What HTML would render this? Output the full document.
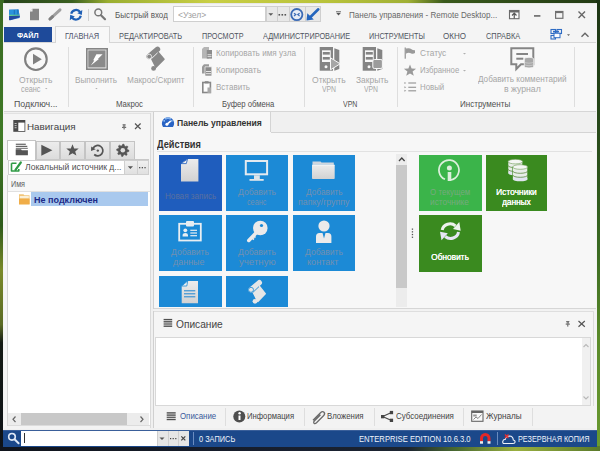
<!DOCTYPE html>
<html><head><meta charset="utf-8"><style>
html,body{margin:0;padding:0;width:600px;height:451px;overflow:hidden;}
body{position:relative;background:#1d2a12;font-family:"Liberation Sans",sans-serif;}
.t{position:absolute;white-space:nowrap;transform-origin:0 0;font-family:"Liberation Sans",sans-serif;}
.r{position:absolute;display:block;}
</style></head><body>
<div class="r" style="left:0;top:0;width:600px;height:451px;background:#2a4a1c"></div>
<div class="r" style="left:0;top:0;width:600px;height:4px;background:linear-gradient(90deg,#24401a 0%,#3a6020 12%,#9aae30 18%,#c9cf45 35%,#b8c23a 55%,#a0b035 68%,#3a5a1c 74%,#223a14 100%)"></div>
<div class="r" style="left:0;top:0;width:4px;height:451px;background:linear-gradient(180deg,#3a6a22 0%,#3f7a26 30%,#2e5a1a 50%,#7a8a2a 60%,#5a6a24 72%,#141a14 76%,#0e1218 100%)"></div>
<div class="r" style="left:596px;top:0;width:4px;height:451px;background:linear-gradient(180deg,#1c3414 0%,#284a1a 30%,#3a6a22 55%,#5a8a2a 75%,#6a9a30 100%)"></div>
<div class="r" style="left:0;top:446px;width:600px;height:5px;background:linear-gradient(90deg,#10141c 0%,#182030 50%,#1c2430 68%,#4a6a30 76%,#9ab040 86%,#5a7a2a 100%)"></div>
<div class="r" style="left:3px;top:3px;width:594px;height:444px;background:#f3f3f3;"></div>
<div class="r" style="left:3px;top:3px;width:594px;height:1px;background:#e8e8e8;"></div>
<div class="r" style="left:4px;top:4px;width:592px;height:22px;background:#f4f4f4;"></div>
<div class="r" style="left:4px;top:26px;width:592px;height:17px;background:#f4f4f4;"></div>
<div class="r" style="left:4px;top:27px;width:48px;height:15px;background:#1e4a9a;"></div>
<div class="r" style="left:55px;top:26px;width:55px;height:17px;background:#f8f8f8;border:1px solid #d6d6d6;border-bottom:none;box-sizing:border-box"></div>
<div class="r" style="left:4px;top:42px;width:592px;height:70px;background:#f8f8f8;border-top:1px solid #d6d6d6;border-bottom:1px solid #d6d6d6;box-sizing:border-box"></div>
<div class="r" style="left:56px;top:41px;width:53px;height:2px;background:#f8f8f8;"></div>
<div class="r" style="left:68px;top:47px;width:1px;height:60px;background:#dedede;"></div>
<div class="r" style="left:193px;top:47px;width:1px;height:60px;background:#dedede;"></div>
<div class="r" style="left:304px;top:47px;width:1px;height:60px;background:#dedede;"></div>
<div class="r" style="left:397px;top:47px;width:1px;height:60px;background:#dedede;"></div>
<div class="r" style="left:574px;top:47px;width:1px;height:60px;background:#dedede;"></div>
<div class="r" style="left:4px;top:112px;width:592px;height:318px;background:#f0f0f0;"></div>
<div class="r" style="left:4px;top:113px;width:147px;height:315px;background:#f5f5f5;"></div>
<div class="r" style="left:150px;top:113px;width:1px;height:315px;background:#dadada;"></div>
<div class="r" style="left:4px;top:113px;width:146px;height:1px;background:#e2e2e2;"></div>
<div class="r" style="left:7px;top:159px;width:142px;height:1px;background:#c8c8c8;"></div>
<div class="r" style="left:36px;top:141px;width:24px;height:18px;background:linear-gradient(#ececec,#dcdcdc);border:1px solid #c4c4c4;border-bottom:none;box-sizing:border-box"></div>
<div class="r" style="left:60px;top:141px;width:25px;height:18px;background:linear-gradient(#ececec,#dcdcdc);border:1px solid #c4c4c4;border-bottom:none;box-sizing:border-box"></div>
<div class="r" style="left:85px;top:141px;width:25px;height:18px;background:linear-gradient(#ececec,#dcdcdc);border:1px solid #c4c4c4;border-bottom:none;box-sizing:border-box"></div>
<div class="r" style="left:110px;top:141px;width:25px;height:18px;background:linear-gradient(#ececec,#dcdcdc);border:1px solid #c4c4c4;border-bottom:none;box-sizing:border-box"></div>
<div class="r" style="left:7px;top:140px;width:29px;height:20px;background:#ffffff;border:1px solid #c4c4c4;border-bottom:none;box-sizing:border-box"></div>
<div class="r" style="left:8px;top:160px;width:141px;height:15px;background:#ffffff;border:1px solid #cfcfcf;box-sizing:border-box"></div>
<div class="r" style="left:124px;top:161px;width:13px;height:13px;background:linear-gradient(#f0f0f0,#e0e0e0);border-left:1px solid #cfcfcf;box-sizing:border-box"></div>
<div class="r" style="left:137px;top:161px;width:11px;height:13px;background:linear-gradient(#f0f0f0,#e0e0e0);border-left:1px solid #cfcfcf;box-sizing:border-box"></div>
<div class="r" style="left:7px;top:175px;width:143px;height:252px;background:#ffffff;border:1px solid #d6d6d6;border-top:none;border-right:none;box-sizing:border-box"></div>
<div class="r" style="left:8px;top:175px;width:142px;height:16px;background:#f7f7f7;"></div>
<div class="r" style="left:8px;top:191px;width:142px;height:1px;background:#e0e0e0;"></div>
<div class="r" style="left:31px;top:192px;width:117px;height:14px;background:#a9c9ee;"></div>
<div class="r" style="left:8px;top:413px;width:141px;height:12px;background:#ececec;"></div>
<div class="r" style="left:21px;top:413px;width:106px;height:12px;background:#c8c8c8;"></div>
<div class="r" style="left:8px;top:425px;width:142px;height:1px;background:#dcdcdc;"></div>
<div class="r" style="left:5px;top:426px;width:145px;height:3px;background:#f3f3f3;"></div>
<div class="r" style="left:153px;top:112px;width:443px;height:197px;background:#f7f7f7;"></div>
<div class="r" style="left:153px;top:112px;width:1px;height:197px;background:#d0d0d0;"></div>
<div class="r" style="left:271px;top:112px;width:325px;height:20px;background:#f0f0f0;"></div>
<div class="r" style="left:270px;top:112px;width:1px;height:20px;background:#d4d4d4;"></div>
<div class="r" style="left:271px;top:132px;width:325px;height:1px;background:#d4d4d4;"></div>
<div class="r" style="left:157px;top:151px;width:435px;height:1px;background:#e2e2e2;"></div>
<div class="r" style="left:154px;top:308px;width:442px;height:1px;background:#d6d6d6;"></div>
<div class="r" style="left:154px;top:309px;width:442px;height:2px;background:#f2f2f2;"></div>
<div class="r" style="left:396px;top:154px;width:11px;height:153px;background:#ececec;"></div>
<div class="r" style="left:396px;top:165px;width:11px;height:123px;background:#c9c9c9;"></div>
<div class="r" style="left:153px;top:311px;width:443px;height:117px;background:#f5f5f5;"></div>
<div class="r" style="left:153px;top:311px;width:1px;height:117px;background:#d0d0d0;"></div>
<div class="r" style="left:154px;top:311px;width:442px;height:1px;background:#dedede;"></div>
<div class="r" style="left:593px;top:312px;width:1px;height:116px;background:#dcdcdc;"></div>
<div class="r" style="left:594px;top:311px;width:2px;height:117px;background:#f3f3f3;"></div>
<div class="r" style="left:155px;top:337px;width:436px;height:69px;background:#ffffff;border:1px solid #d8d8d8;box-sizing:border-box"></div>
<div class="r" style="left:582px;top:338px;width:8px;height:67px;background:#f0f0f0;"></div>
<div class="r" style="left:154px;top:406px;width:442px;height:22px;background:#f3f3f3;"></div>
<div class="r" style="left:225px;top:408px;width:1px;height:18px;background:#dedede;"></div>
<div class="r" style="left:304px;top:408px;width:1px;height:18px;background:#dedede;"></div>
<div class="r" style="left:374px;top:408px;width:1px;height:18px;background:#dedede;"></div>
<div class="r" style="left:463px;top:408px;width:1px;height:18px;background:#dedede;"></div>
<div class="r" style="left:532px;top:408px;width:1px;height:18px;background:#dedede;"></div>
<div class="r" style="left:3px;top:430px;width:594px;height:17px;background:#1b488a;"></div>
<div class="r" style="left:3px;top:430px;width:594px;height:1px;background:#3a5f9a;"></div>
<div class="r" style="left:21px;top:431px;width:136px;height:15px;background:#ffffff;"></div>
<div class="r" style="left:157px;top:431px;width:11px;height:15px;background:#e6e6e6;border-left:1px solid #cfcfcf;box-sizing:border-box"></div>
<div class="r" style="left:168px;top:431px;width:10px;height:15px;background:#e6e6e6;border-left:1px solid #cfcfcf;box-sizing:border-box"></div>
<div class="r" style="left:178px;top:431px;width:11px;height:15px;background:#e6e6e6;border-left:1px solid #cfcfcf;box-sizing:border-box"></div>
<div class="r" style="left:193px;top:432px;width:1px;height:13px;background:#6a8cc0;"></div>
<div class="r" style="left:497px;top:432px;width:1px;height:13px;background:#6a8cc0;"></div>
<div class="r" style="left:24px;top:433px;width:1px;height:10px;background:#303030;"></div>
<div class="t" style="left:17.00px;top:31.77px;font-size:7.8px;line-height:7.8px;color:#ffffff;font-weight:bold;transform:scaleX(0.9281);">ФАЙЛ</div>
<div class="t" style="left:65.00px;top:31.57px;font-size:8.5px;line-height:8.5px;color:#4a5068;font-weight:normal;transform:scaleX(0.8724);">ГЛАВНАЯ</div>
<div class="t" style="left:118.75px;top:31.67px;font-size:8.5px;line-height:8.5px;color:#50555f;font-weight:normal;transform:scaleX(0.8749);">РЕДАКТИРОВАТЬ</div>
<div class="t" style="left:202.00px;top:31.67px;font-size:8.5px;line-height:8.5px;color:#50555f;font-weight:normal;transform:scaleX(0.8506);">ПРОСМОТР</div>
<div class="t" style="left:262.50px;top:31.67px;font-size:8.5px;line-height:8.5px;color:#50555f;font-weight:normal;transform:scaleX(0.8618);">АДМИНИСТРИРОВАНИЕ</div>
<div class="t" style="left:368.75px;top:31.67px;font-size:8.5px;line-height:8.5px;color:#50555f;font-weight:normal;transform:scaleX(0.8489);">ИНСТРУМЕНТЫ</div>
<div class="t" style="left:443.00px;top:31.67px;font-size:8.5px;line-height:8.5px;color:#50555f;font-weight:normal;transform:scaleX(0.9461);">ОКНО</div>
<div class="t" style="left:485.75px;top:31.67px;font-size:8.5px;line-height:8.5px;color:#50555f;font-weight:normal;transform:scaleX(0.8703);">СПРАВКА</div>
<div class="t" style="left:115.00px;top:11.08px;font-size:8.5px;line-height:8.5px;color:#585858;font-weight:normal;transform:scaleX(0.9440);">Быстрый вход</div>
<div class="r" style="left:173px;top:6px;width:93px;height:16px;background:#ffffff;border:1px solid #cfcfcf;box-sizing:border-box"></div>
<div class="r" style="left:266px;top:6px;width:55px;height:16px;background:#e8e8e8;border:1px solid #cfcfcf;box-sizing:border-box"></div>
<div class="r" style="left:277px;top:7px;width:1px;height:14px;background:#cfcfcf;"></div>
<div class="r" style="left:289px;top:7px;width:1px;height:14px;background:#cfcfcf;"></div>
<div class="r" style="left:305px;top:7px;width:1px;height:14px;background:#cfcfcf;"></div>
<div class="t" style="left:177.50px;top:11.47px;font-size:8.5px;line-height:8.5px;color:#a0a0a0;font-weight:normal;transform:scaleX(1.0089);">&lt;Узел&gt;</div>
<div class="t" style="left:349.20px;top:10.97px;font-size:8.5px;line-height:8.5px;color:#686868;font-weight:normal;transform:scaleX(0.9505);">Панель управления - Remote Desktop...</div>
<div class="r" style="left:88px;top:9px;width:1px;height:12px;background:#d0d0d0;"></div>
<div class="t" style="left:18.60px;top:75.78px;font-size:8.5px;line-height:8.5px;color:#a6a6a6;font-weight:normal;transform:scaleX(1.0011);">Открыть</div>
<div class="t" style="left:21.30px;top:84.98px;font-size:8.5px;line-height:8.5px;color:#a6a6a6;font-weight:normal;transform:scaleX(0.8608);">сеанс</div>
<div class="t" style="left:14.00px;top:100.48px;font-size:8.5px;line-height:8.5px;color:#505050;font-weight:normal;transform:scaleX(1.0339);">Подключ...</div>
<div class="t" style="left:75.40px;top:75.98px;font-size:8.5px;line-height:8.5px;color:#a6a6a6;font-weight:normal;transform:scaleX(0.9623);">Выполнить</div>
<div class="t" style="left:126.80px;top:75.98px;font-size:8.5px;line-height:8.5px;color:#a6a6a6;font-weight:normal;transform:scaleX(0.9647);">Макрос/Скрипт</div>
<div class="t" style="left:116.40px;top:100.48px;font-size:8.5px;line-height:8.5px;color:#505050;font-weight:normal;transform:scaleX(0.9207);">Макрос</div>
<div class="t" style="left:216.00px;top:48.77px;font-size:8.5px;line-height:8.5px;color:#a6a6a6;font-weight:normal;transform:scaleX(0.9584);">Копировать имя узла</div>
<div class="t" style="left:216.00px;top:66.18px;font-size:8.5px;line-height:8.5px;color:#a6a6a6;font-weight:normal;transform:scaleX(0.9831);">Копировать</div>
<div class="t" style="left:216.00px;top:83.48px;font-size:8.5px;line-height:8.5px;color:#a6a6a6;font-weight:normal;transform:scaleX(0.9434);">Вставить</div>
<div class="t" style="left:221.60px;top:100.48px;font-size:8.5px;line-height:8.5px;color:#505050;font-weight:normal;transform:scaleX(0.9066);">Буфер обмена</div>
<div class="t" style="left:312.00px;top:75.88px;font-size:8.5px;line-height:8.5px;color:#a6a6a6;font-weight:normal;transform:scaleX(1.0071);">Открыть</div>
<div class="t" style="left:321.60px;top:84.88px;font-size:8.5px;line-height:8.5px;color:#a6a6a6;font-weight:normal;transform:scaleX(0.8015);">VPN</div>
<div class="t" style="left:355.60px;top:75.88px;font-size:8.5px;line-height:8.5px;color:#a6a6a6;font-weight:normal;transform:scaleX(0.9901);">Закрыть</div>
<div class="t" style="left:364.40px;top:84.88px;font-size:8.5px;line-height:8.5px;color:#a6a6a6;font-weight:normal;transform:scaleX(0.8015);">VPN</div>
<div class="t" style="left:343.00px;top:100.48px;font-size:8.5px;line-height:8.5px;color:#505050;font-weight:normal;transform:scaleX(0.8244);">VPN</div>
<div class="t" style="left:419.75px;top:49.27px;font-size:8.5px;line-height:8.5px;color:#a6a6a6;font-weight:normal;transform:scaleX(0.9773);">Статус</div>
<div class="t" style="left:419.75px;top:66.38px;font-size:8.5px;line-height:8.5px;color:#a6a6a6;font-weight:normal;transform:scaleX(0.9108);">Избранное</div>
<div class="t" style="left:419.75px;top:83.28px;font-size:8.5px;line-height:8.5px;color:#a6a6a6;font-weight:normal;transform:scaleX(0.9248);">Новый</div>
<div class="t" style="left:478.20px;top:75.28px;font-size:8.5px;line-height:8.5px;color:#a6a6a6;font-weight:normal;transform:scaleX(0.9593);">Добавить комментарий</div>
<div class="t" style="left:503.75px;top:84.58px;font-size:8.5px;line-height:8.5px;color:#a6a6a6;font-weight:normal;transform:scaleX(1.0233);">в журнал</div>
<div class="t" style="left:459.50px;top:100.48px;font-size:8.5px;line-height:8.5px;color:#505050;font-weight:normal;transform:scaleX(0.9472);">Инструменты</div>
<div class="t" style="left:27.30px;top:122.42px;font-size:9.5px;line-height:9.5px;color:#444444;font-weight:normal;transform:scaleX(1.0377);">Навигация</div>
<div class="t" style="left:24.80px;top:163.28px;font-size:8.5px;line-height:8.5px;color:#505050;font-weight:normal;transform:scaleX(1.0096);">Локальный источник д...</div>
<div class="t" style="left:11.00px;top:179.78px;font-size:8.5px;line-height:8.5px;color:#606060;font-weight:normal;transform:scaleX(0.8446);">Имя</div>
<div class="t" style="left:34.30px;top:195.78px;font-size:8.5px;line-height:8.5px;color:#1c2a88;font-weight:bold;transform:scaleX(1.0612);">Не подключен</div>
<div class="t" style="left:176.50px;top:119.28px;font-size:8.5px;line-height:8.5px;color:#333333;font-weight:bold;transform:scaleX(1.0096);">Панель управления</div>
<div class="t" style="left:157.30px;top:140.10px;font-size:10px;line-height:10px;color:#333333;font-weight:bold;transform:scaleX(0.9232);">Действия</div>
<div class="r" style="left:159px;top:155px;width:63px;height:56px;background:#1f5dbd;"></div>
<div class="r" style="left:226px;top:155px;width:62px;height:56px;background:#1c8ad6;"></div>
<div class="r" style="left:293px;top:155px;width:62px;height:56px;background:#1c8ad6;"></div>
<div class="r" style="left:159px;top:215px;width:63px;height:56px;background:#1c8ad6;"></div>
<div class="r" style="left:226px;top:215px;width:62px;height:56px;background:#1c8ad6;"></div>
<div class="r" style="left:293px;top:215px;width:62px;height:56px;background:#1c8ad6;"></div>
<div class="r" style="left:159px;top:276px;width:63px;height:31px;background:#1c8ad6;"></div>
<div class="r" style="left:226px;top:276px;width:62px;height:31px;background:#1c8ad6;"></div>
<div class="r" style="left:419px;top:155px;width:63px;height:56px;background:#3bb44a;"></div>
<div class="r" style="left:486px;top:155px;width:61px;height:56px;background:#3a8a1f;"></div>
<div class="r" style="left:419px;top:215px;width:63px;height:57px;background:#3a8a1f;"></div>
<div class="t" style="left:164.80px;top:192.28px;font-size:8.5px;line-height:8.5px;color:#5a70a0;font-weight:normal;transform:scaleX(0.9565);">Новая запись</div>
<div class="t" style="left:237.80px;top:188.08px;font-size:8.5px;line-height:8.5px;color:#7290b0;font-weight:normal;transform:scaleX(1.0141);">Добавить</div>
<div class="t" style="left:247.20px;top:197.58px;font-size:8.5px;line-height:8.5px;color:#7290b0;font-weight:normal;transform:scaleX(0.8520);">сеанс</div>
<div class="t" style="left:305.50px;top:188.08px;font-size:8.5px;line-height:8.5px;color:#7290b0;font-weight:normal;transform:scaleX(0.9768);">Добавить</div>
<div class="t" style="left:297.80px;top:197.58px;font-size:8.5px;line-height:8.5px;color:#7290b0;font-weight:normal;transform:scaleX(1.0319);">папку/группу</div>
<div class="t" style="left:171.00px;top:248.08px;font-size:8.5px;line-height:8.5px;color:#7290b0;font-weight:normal;transform:scaleX(1.0114);">Добавить</div>
<div class="t" style="left:173.20px;top:257.52px;font-size:8.5px;line-height:8.5px;color:#7290b0;font-weight:normal;transform:scaleX(1.0528);">данные</div>
<div class="t" style="left:238.00px;top:248.08px;font-size:8.5px;line-height:8.5px;color:#7290b0;font-weight:normal;transform:scaleX(1.0114);">Добавить</div>
<div class="t" style="left:239.00px;top:257.52px;font-size:8.5px;line-height:8.5px;color:#7290b0;font-weight:normal;transform:scaleX(1.1363);">учетную</div>
<div class="t" style="left:305.00px;top:248.08px;font-size:8.5px;line-height:8.5px;color:#7290b0;font-weight:normal;transform:scaleX(1.0114);">Добавить</div>
<div class="t" style="left:307.25px;top:257.52px;font-size:8.5px;line-height:8.5px;color:#7290b0;font-weight:normal;transform:scaleX(1.0695);">контакт</div>
<div class="t" style="left:429.50px;top:188.08px;font-size:8.5px;line-height:8.5px;color:#76aa7e;font-weight:normal;transform:scaleX(0.9361);">О текущем</div>
<div class="t" style="left:430.20px;top:197.58px;font-size:8.5px;line-height:8.5px;color:#76aa7e;font-weight:normal;transform:scaleX(0.9789);">источнике</div>
<div class="t" style="left:496.20px;top:188.08px;font-size:8.5px;line-height:8.5px;color:#ffffff;font-weight:normal;transform:scaleX(0.9889);text-shadow:0.2px 0 0 #ffffff">Источники</div>
<div class="t" style="left:501.80px;top:197.58px;font-size:8.5px;line-height:8.5px;color:#ffffff;font-weight:normal;transform:scaleX(0.9745);text-shadow:0.2px 0 0 #ffffff">данных</div>
<div class="t" style="left:430.90px;top:253.47px;font-size:8.5px;line-height:8.5px;color:#ffffff;font-weight:normal;transform:scaleX(0.9817);text-shadow:0.2px 0 0 #ffffff">Обновить</div>
<div class="t" style="left:175.50px;top:319.50px;font-size:10px;line-height:10px;color:#444444;font-weight:normal;transform:scaleX(1.0152);">Описание</div>
<div class="t" style="left:179.70px;top:412.38px;font-size:8.5px;line-height:8.5px;color:#3a5a9a;font-weight:normal;transform:scaleX(0.9258);">Описание</div>
<div class="t" style="left:247.30px;top:412.38px;font-size:8.5px;line-height:8.5px;color:#444444;font-weight:normal;transform:scaleX(0.9047);">Информация</div>
<div class="t" style="left:326.80px;top:412.38px;font-size:8.5px;line-height:8.5px;color:#444444;font-weight:normal;transform:scaleX(0.9166);">Вложения</div>
<div class="t" style="left:396.10px;top:412.38px;font-size:8.5px;line-height:8.5px;color:#444444;font-weight:normal;transform:scaleX(0.9331);">Субсоединения</div>
<div class="t" style="left:486.00px;top:412.38px;font-size:8.5px;line-height:8.5px;color:#444444;font-weight:normal;transform:scaleX(0.9611);">Журналы</div>
<div class="t" style="left:198.75px;top:434.77px;font-size:8.5px;line-height:8.5px;color:#f0f4fa;font-weight:normal;transform:scaleX(0.8686);">0 ЗАПИСЬ</div>
<div class="t" style="left:358.70px;top:435.17px;font-size:8.5px;line-height:8.5px;color:#f0f4fa;font-weight:normal;transform:scaleX(0.8984);">ENTERPRISE EDITION 10.6.3.0</div>
<div class="t" style="left:518.10px;top:435.17px;font-size:8.5px;line-height:8.5px;color:#f0f4fa;font-weight:normal;transform:scaleX(0.8570);">РЕЗЕРВНАЯ КОПИЯ</div>
<svg class="r" style="left:0;top:0;" width="600" height="451" viewBox="0 0 600 451">
    <path d="M9.1 9.8 L18.5 9.5 L19.8 16.8 L19.5 18 L10 20.3 L9.1 20 Z" fill="#2a6cc0"/>
    <path d="M9.1 9.8 L18.5 9.5 L19.3 14.7 L9.1 14.9 Z" fill="#2a92dc"/>
    <path d="M14.3 10 L14.3 14.7 M17.7 9.7 L17.9 14.6" stroke="#1a64b0" stroke-width="0.8"/>
    <path d="M9.1 15.4 L19.4 15.2" stroke="#6ad890" stroke-width="1.1"/>
    <path d="M9.1 16 L19.5 15.8 L19.8 17 L10 20.3 L9.1 20 Z" fill="#2448a0"/>
    <path d="M30 11.5 L32.5 8.8 L39 8.8 L39 20.3 L30 20.3 Z" fill="#858585"/>
    <path d="M30 11.5 L32.5 8.8 L32.5 11.5 Z" fill="#f4f4f4"/>
    <path d="M50 19 L60 9.8" stroke="#a0a0a0" stroke-width="3" stroke-linecap="round"/>
    <path d="M50 19 L52.5 16.7" stroke="#808080" stroke-width="3" stroke-linecap="round"/>
    <path d="M71.2 13.8 A5 5 0 0 1 80.2 12.2" stroke="#1f5fb5" stroke-width="2.2" fill="none"/>
    <path d="M82.3 10 L81.8 15 L77.3 13.3 Z" fill="#1f5fb5"/>
    <path d="M80.8 15.8 A5 5 0 0 1 71.8 17.3" stroke="#1f5fb5" stroke-width="2.2" fill="none"/>
    <path d="M69.8 20.2 L70.2 14.8 L74.8 16.4 Z" fill="#1f5fb5"/>
    <circle cx="98.3" cy="12.4" r="3.4" stroke="#767676" stroke-width="1.5" fill="none"/>
    <path d="M101 15.2 L105 19.2" stroke="#767676" stroke-width="2.2" stroke-linecap="round"/>
    <path d="M268.4 13.3 L273.2 13.3 L270.8 15.8 Z" fill="#5a5a5a"/>
    <rect x="278.5" y="14" width="1.6" height="1.6" fill="#555"/><rect x="281.5" y="14" width="1.6" height="1.6" fill="#555"/><rect x="284.5" y="14" width="1.6" height="1.6" fill="#555"/>
    <circle cx="296.8" cy="14.6" r="5.6" stroke="#3a6ab5" stroke-width="1.8" fill="#e6ecf6"/>
    <path d="M294 13.2 L295.8 14.6 L294 16" stroke="#3a6ab5" stroke-width="1.2" fill="none"/>
    <path d="M299.6 13.2 L297.8 14.6 L299.6 16" stroke="#3a6ab5" stroke-width="1.2" fill="none"/>
    <path d="M318.3 9.3 L310.5 17" stroke="#2465bd" stroke-width="2.6" stroke-linecap="round"/><path d="M306.5 20.5 L307.3 13.3 L313.8 19.6 Z" fill="#2465bd"/>
    <path d="M336 11.8 L341 11.8" stroke="#555" stroke-width="0.9"/>
    <path d="M336.3 13 L340.8 13 L338.5 15.6 Z" fill="#555"/>
    <rect x="509.5" y="10.5" width="9.5" height="8.2" stroke="#6a6a6a" stroke-width="1.1" fill="#fafafa"/>
    <rect x="509.5" y="10.5" width="9.5" height="2" fill="#6a6a6a"/>
    <path d="M514.25 18.5 L514.25 13.3 M512 15.5 L514.25 13.2 L516.5 15.5" stroke="#555" stroke-width="1.2" fill="none"/>
    <rect x="534" y="15" width="6.4" height="1.8" fill="#777"/>
    <rect x="555.6" y="11.5" width="7.3" height="6.8" stroke="#707070" stroke-width="1.2" fill="none"/>
    <rect x="555.6" y="11.3" width="7.3" height="1.8" fill="#707070"/>
    <path d="M578.5 11.5 L585 18 M585 11.5 L578.5 18" stroke="#666" stroke-width="1.4"/>
    </svg>
<svg class="r" style="left:0;top:0;" width="600" height="451" viewBox="0 0 600 451">
    <rect x="551" y="29.5" width="4.5" height="4" stroke="#2e6cc4" stroke-width="1.1" fill="none"/>
    <rect x="557" y="29.5" width="4.5" height="4" stroke="#2e6cc4" stroke-width="1.1" fill="none"/>
    <rect x="553" y="30.8" width="6" height="1.6" fill="#2e6cc4"/>
    <rect x="551" y="35.5" width="4.5" height="3.5" stroke="#2e6cc4" stroke-width="1.1" fill="none"/>
    <rect x="554" y="33.2" width="6" height="4.5" stroke="#2e6cc4" stroke-width="1" fill="#fafcff"/>
    <path d="M567 34.3 L570 34.3 L568.5 36 Z" fill="#666"/>
    <path d="M581.5 36.8 L585 33.3 L588.5 36.8" stroke="#666" stroke-width="1.4" fill="none"/>
    </svg>
<svg class="r" style="left:0;top:0;" width="600" height="451" viewBox="0 0 600 451">
    <circle cx="35.9" cy="59.2" r="10.8" stroke="#808080" stroke-width="2.1" fill="none"/>
    <path d="M33 53.8 L41.8 59.2 L33 64.6 Z" fill="#808080"/>
    <rect x="86.8" y="48.8" width="20.4" height="20.4" stroke="#858585" stroke-width="1.6" fill="#e8e8e8"/>
    <rect x="88.3" y="50.4" width="17.2" height="17" fill="#8a8a8a"/>
    <path d="M96.4 54.2 L102.6 54.2 L97.9 58.9 L98.9 59.1 L90.8 65.6 L94.3 60.4 L93.2 60.2 Z" fill="#ffffff"/>
    <path d="M149 56.5 L157.5 49.3" stroke="#888" stroke-width="5.4" stroke-linecap="round"/>
    <path d="M151.5 58.5 L158.3 52.5 L164 59.3 L156 67.3 Z" fill="#888" stroke="#888" stroke-width="1.5" stroke-linejoin="round"/>
    <circle cx="149.2" cy="56.6" r="2.4" fill="#888" stroke="#f8f8f8" stroke-width="0.8"/>
    <circle cx="153.6" cy="68.4" r="2.4" fill="#888"/>
    <path d="M151.3 58.8 L157.6 52.8" stroke="#f8f8f8" stroke-width="0.9"/>
    </svg>
<svg class="r" style="left:0;top:0;" width="600" height="451" viewBox="0 0 600 451">
    <path d="M202 49 L204 47 L209 47 L209 58.6 L202 58.6 Z" fill="#b5b5b5"/>
    <rect x="206.8" y="50" width="5.2" height="8.6" fill="#8c8c8c"/>
    <rect x="207.5" y="54.3" width="4" height="0.9" fill="#e8e8e8"/><rect x="207.5" y="56.2" width="4" height="0.9" fill="#e8e8e8"/>
    <path d="M202 66.5 L204 64.3 L209 64.3 L209 73.5 L202 73.5 Z" fill="#9a9a9a"/>
    <path d="M205 66.8 L211.8 66.8 L211.8 76 L205 76 Z" fill="#8a8a8a" stroke="#f8f8f8" stroke-width="0.7"/>
    <rect x="206" y="71" width="5" height="1" fill="#e6e6e6"/><rect x="206" y="73.2" width="5" height="1" fill="#e6e6e6"/>
    <rect x="202.8" y="82.5" width="7.6" height="10" stroke="#888" stroke-width="1.6" fill="#fdfdfd"/>
    <rect x="204.8" y="81.2" width="3.8" height="2.2" fill="#888"/>
    <rect x="207.5" y="87.5" width="3.5" height="5.5" fill="#a8a8a8"/>
    </svg>
<svg class="r" style="left:0;top:0;" width="600" height="451" viewBox="0 0 600 451"><g transform="translate(0,0)">
        <path d="M334.3 48.2 L339.3 50 L339.3 69 L334.3 70.7 Z" fill="#848484"/>
        <rect x="319.7" y="47" width="13.3" height="23.7" fill="#848484"/>
        <rect x="322" y="50.3" width="8.7" height="11.7" fill="#f8f8f8"/>
        <rect x="322.8" y="52" width="7" height="2.6" fill="#848484"/>
        <rect x="322.8" y="57" width="7" height="2.6" fill="#848484"/>
        <circle cx="326" cy="66.7" r="1.5" fill="#f8f8f8"/>
        </g></svg>
<svg class="r" style="left:0;top:0;" width="600" height="451" viewBox="0 0 600 451"><g transform="translate(43,0)">
        <path d="M334.3 48.2 L339.3 50 L339.3 69 L334.3 70.7 Z" fill="#848484"/>
        <rect x="319.7" y="47" width="13.3" height="23.7" fill="#848484"/>
        <rect x="322" y="50.3" width="8.7" height="11.7" fill="#f8f8f8"/>
        <rect x="322.8" y="52" width="7" height="2.6" fill="#848484"/>
        <rect x="322.8" y="57" width="7" height="2.6" fill="#848484"/>
        <circle cx="326" cy="66.7" r="1.5" fill="#f8f8f8"/>
        </g></svg>
<svg class="r" style="left:0;top:0;" width="600" height="451" viewBox="0 0 600 451">
    <path d="M330.5 57.8 L340.2 63.8 L330.5 69.8 Z" fill="#a6a6a6" stroke="#f8f8f8" stroke-width="1"/>
    <rect x="372.8" y="59.5" width="9.6" height="9" rx="1.5" fill="#9c9c9c" stroke="#f8f8f8" stroke-width="1"/>
    </svg>
<svg class="r" style="left:0;top:0;" width="600" height="451" viewBox="0 0 600 451">
    <rect x="404.6" y="47.5" width="1.3" height="11.2" fill="#9a9a9a"/>
    <path d="M405.8 48.6 Q409.5 47.6 411.5 49.2 Q413 50.4 415 50.2 L415 53 Q413 54.4 410.8 53.2 Q408.5 52 405.8 53.8 Z" fill="#9a9a9a"/>
    <path d="M410 64.4 L411.6 68.6 L416.1 68.8 L412.6 71.6 L413.8 75.8 L410 73.4 L406.2 75.8 L407.4 71.6 L403.9 68.8 L408.4 68.6 Z" fill="#9a9a9a"/>
    <path d="M404.4 82 L406.3 83 L404.4 84 Z M404.4 86.3 L406.3 87.3 L404.4 88.3 Z M404.4 89.8 L406.3 90.8 L404.4 91.8 Z" fill="#9a9a9a"/>
    <rect x="408.3" y="82.4" width="7.8" height="1.2" fill="#9a9a9a"/>
    <rect x="408.3" y="86.7" width="7.8" height="1.2" fill="#9a9a9a"/>
    <rect x="408.3" y="90.2" width="7.8" height="1.2" fill="#9a9a9a"/>
    <path d="M463 53 L466 53 L464.5 54.6 Z" fill="#b0b0b0"/>
    <path d="M463 70 L466 70 L464.5 71.6 Z" fill="#b0b0b0"/>
    <path d="M45 88 L47.5 88 L46.25 89.3 Z" fill="#b0b0b0"/>
    <path d="M95.2 88 L97.7 88 L96.45 89.3 Z" fill="#b0b0b0"/>
    </svg>
<svg class="r" style="left:0;top:0;" width="600" height="451" viewBox="0 0 600 451">
    <path d="M511.3 48.3 L533.3 48.3 L533.3 64.3 L521 64.3 L516.3 69 L516.3 64.3 L511.3 64.3 Z" stroke="#858585" stroke-width="2" fill="#f8f8f8" stroke-linejoin="miter"/>
    <rect x="516.3" y="53" width="11.7" height="2" fill="#858585"/>
    <rect x="516.3" y="57.7" width="7" height="2" fill="#858585"/>
    <path d="M524.3 59 A4.7 1.7 0 0 1 533.7 59 L533.7 66.3 A4.7 1.7 0 0 1 524.3 66.3 Z" fill="#a8a8a8" stroke="#f8f8f8" stroke-width="0.8"/>
    <path d="M524.3 61.5 A4.7 1.7 0 0 0 533.7 61.5 M524.3 64 A4.7 1.7 0 0 0 533.7 64" stroke="#d8d8d8" stroke-width="0.6" fill="none"/>
    </svg>
<svg class="r" style="left:0;top:0;" width="600" height="451" viewBox="0 0 600 451">
    <rect x="13.3" y="120" width="12" height="11.8" fill="#4a4a4a"/>
    <rect x="18.3" y="122.6" width="6.2" height="8.4" fill="#ffffff"/>
    <rect x="14.6" y="123" width="2" height="0.9" fill="#cfcfcf"/>
    <rect x="14.6" y="125.2" width="2" height="0.9" fill="#cfcfcf"/>
    <rect x="14.6" y="127.3" width="2" height="0.9" fill="#cfcfcf"/>
    <path d="M122.6 124.8 L125.6 124.8 M124.1 127.6 L124.1 129.5 M122 127.4 L126.2 127.4" stroke="#5a5a5a" stroke-width="1"/>
    <rect x="122.9" y="124.8" width="2.4" height="2.6" fill="#8a8a8a"/>
    <path d="M135 123.5 L140.6 129 M140.6 123.5 L135 129" stroke="#555" stroke-width="1.2"/>
    </svg>
<svg class="r" style="left:0;top:0;" width="600" height="451" viewBox="0 0 600 451">
    <rect x="15.8" y="143.7" width="10" height="1.1" fill="#555"/>
    <rect x="15.8" y="145.8" width="11.5" height="1.1" fill="#555"/>
    <rect x="15.8" y="147.8" width="12" height="1.1" fill="#777"/>
    <path d="M15.7 149.3 L21 149.3 L21.8 150.3 L27.9 150.3 L27.9 155.3 L15.7 155.3 Z" fill="#555"/>
    <path d="M41.3 144.8 L52.4 150.3 L41.3 155.8 Z" fill="#555"/>
    <path d="M72.5 144.2 L74.2 148.4 L78.7 148.6 L75.2 151.4 L76.4 155.6 L72.5 153.2 L68.6 155.6 L69.8 151.4 L66.3 148.6 L70.8 148.4 Z" fill="#555"/>
    <path d="M93.2 148 A5.2 5.2 0 1 1 94.2 154.5" stroke="#555" stroke-width="1.7" fill="none"/>
    <path d="M91.2 146.5 L95.7 149.3 L91 151 Z" fill="#555"/>
    <circle cx="97.8" cy="150.6" r="1.2" fill="#555"/>
    </svg>
<svg class="r" style="left:0;top:0;" width="600" height="451" viewBox="0 0 600 451"><polygon points="122.80,144.10 124.01,144.22 124.56,146.05 125.36,146.48 127.18,145.92 127.96,146.86 127.05,148.54 127.31,149.40 129.00,150.30 128.88,151.51 127.05,152.06 126.62,152.86 127.18,154.68 126.24,155.46 124.56,154.55 123.70,154.81 122.80,156.50 121.59,156.38 121.04,154.55 120.24,154.12 118.42,154.68 117.64,153.74 118.55,152.06 118.29,151.20 116.60,150.30 116.72,149.09 118.55,148.54 118.98,147.74 118.42,145.92 119.36,145.14 121.04,146.05 121.90,145.79" fill="#555" stroke="#555" stroke-width="0.5" stroke-linejoin="round"/><circle cx="122.8" cy="150.3" r="2.3" fill="#dedede"/></svg>
<svg class="r" style="left:0;top:0;" width="600" height="451" viewBox="0 0 600 451">
    <path d="M11.5 163.2 L16.5 163.2 M18.8 169 L18.8 171 L11.5 171 L11.5 163.2" stroke="#2e9a44" stroke-width="1.6" fill="none" stroke-linejoin="round"/>
    <path d="M15.5 169.8 L20.8 162.5" stroke="#2e9a44" stroke-width="2.2" stroke-linecap="round"/>
    <path d="M127.8 166.3 L133 166.3 L130.4 169 Z" fill="#555"/>
    <rect x="139" y="167" width="1.3" height="1.3" fill="#555"/><rect x="141.7" y="167" width="1.3" height="1.3" fill="#555"/><rect x="144.4" y="167" width="1.3" height="1.3" fill="#555"/>
    </svg>
<svg class="r" style="left:0;top:0;" width="600" height="451" viewBox="0 0 600 451">
    <path d="M19 194.3 L23.5 194.3 L24.3 195.2 L29.5 195.2 L29.5 204.3 L19 204.3 Z" fill="#f2c67a"/>
    <rect x="19.8" y="196" width="9" height="2.5" fill="#faf0d8"/>
    <rect x="19" y="198.6" width="10.6" height="5.8" fill="#f0ad48"/>
    </svg>
<svg class="r" style="left:0;top:0;" width="600" height="451" viewBox="0 0 600 451">
    <path d="M15.5 416.5 L13 419.3 L15.5 422" stroke="#666" stroke-width="1.2" fill="none"/>
    <path d="M140.5 416.5 L143 419.3 L140.5 422" stroke="#666" stroke-width="1.2" fill="none"/>
    </svg>
<svg class="r" style="left:0;top:0;" width="600" height="451" viewBox="0 0 600 451">
    <path d="M162.6 126.2 A6.1 6.1 0 1 1 173.4 126.2 Q173 127.1 172 127.1 L164 127.1 Q163 127.1 162.6 126.2 Z" fill="#2a64c4"/>
    <path d="M164.90 121.17 L163.49 120.66 M166.35 119.44 L165.60 118.14 M168.00 119.00 L168.00 117.50 M169.65 119.44 L170.40 118.14 M171.10 121.17 L172.51 120.66" stroke="#a8d4ff" stroke-width="1.4"/>
    <path d="M166.8 124.3 L170.3 121.3" stroke="#ffffff" stroke-width="1.6" stroke-linecap="round"/>
    <circle cx="166.9" cy="124.3" r="1.5" fill="#ffffff"/>
    </svg>
<svg class="r" style="left:0;top:0;" width="600" height="451" viewBox="0 0 600 451">
    <defs><linearGradient id="dg" x1="0" y1="0" x2="0" y2="1"><stop offset="0" stop-color="#ececec"/><stop offset="1" stop-color="#d2d2d2"/></linearGradient></defs><path d="M181 163.6 L187.5 159.1 L198.4 159.1 L198.4 181.5 L181 181.5 Z" fill="url(#dg)"/>
    <path d="M181 163.6 L186.3 163.6 L187.5 159.1 Z" fill="#f0f0f0" stroke="#1f5dbd" stroke-width="0.8"/>
    <rect x="245.8" y="161" width="21.3" height="13.3" stroke="#e4eaf0" stroke-width="2" fill="none"/>
    <rect x="254" y="175.3" width="5.8" height="3.7" fill="#dfe5ea"/>
    <rect x="249.5" y="179" width="14.2" height="1.8" fill="#dfe5ea"/>
    <path d="M312.5 161.6 L320.5 161.6 L321.5 162.6 L333.8 162.6 L333.8 164.7 L312.5 164.7 Z" fill="#cfd6de"/>
    <rect x="312" y="164.7" width="22.7" height="14.3" rx="0.8" fill="url(#dg)"/>
    <rect x="312.3" y="164.7" width="22.1" height="1" fill="#f6f6f6"/>
    </svg>
<svg class="r" style="left:0;top:0;" width="600" height="451" viewBox="0 0 600 451">
    <rect x="179.2" y="223.8" width="21.6" height="16.7" stroke="#e8eef2" stroke-width="1.8" fill="none"/>
    <rect x="186" y="221" width="8" height="5.5" rx="1" fill="#e8eef2"/>
    <circle cx="185.3" cy="230.3" r="1.9" fill="#e8eef2"/>
    <path d="M182.6 236.5 L182.6 234.8 Q182.8 233 185.3 233 Q187.8 233 188 234.8 L188 236.5 Z" fill="#e8eef2"/>
    <rect x="190.3" y="229.7" width="6.7" height="1.2" fill="#e8eef2"/>
    <rect x="190.3" y="232.4" width="6.7" height="1.2" fill="#e8eef2"/>
    <rect x="190.3" y="235.1" width="6.7" height="1.2" fill="#e8eef2"/>
    </svg>
<svg class="r" style="left:0;top:0;" width="600" height="451" viewBox="0 0 600 451">
    <circle cx="260.3" cy="228" r="7.3" fill="#eceaea"/>
    <circle cx="261.5" cy="225.5" r="1.6" fill="#1c8ad6"/>
    <path d="M256 233 L248.8 240.4" stroke="#eceaea" stroke-width="3.6" stroke-linecap="round"/>
    <path d="M252 238 L254 239.5 M253.8 236.2 L255.5 237.5" stroke="#eceaea" stroke-width="1.6"/>
    <circle cx="324" cy="226" r="5.6" fill="#eceaea"/>
    <path d="M316 243 L316 236.5 Q316 233 319.5 233 L322.5 233 L324 238.5 L325.5 233 L328 233 Q331.4 233 331.4 236.5 L331.4 243 Z" fill="#eceaea"/>
    </svg>
<svg class="r" style="left:0;top:0;" width="600" height="451" viewBox="0 0 600 451">
    <path d="M181.7 286 L187.7 281 L198 281 L198 303.3 L181.7 303.3 Z" fill="url(#dg)"/>
    <path d="M181.7 286 L186.8 286 L187.7 281 Z" fill="#f2f2f2" stroke="#1c8ad6" stroke-width="0.8"/>
    <rect x="184" y="290.1" width="11.3" height="1.3" fill="#4a9ad4"/>
    <rect x="184" y="293.1" width="11.3" height="1.3" fill="#4a9ad4"/>
    <rect x="184" y="296.1" width="11.3" height="1.3" fill="#4a9ad4"/>
    </svg>
<svg class="r" style="left:0;top:0;" width="600" height="451" viewBox="0 0 600 451">
    <path d="M251 289.8 L259.3 282.7" stroke="#e6e6e6" stroke-width="5.4" stroke-linecap="round"/>
    <path d="M253 292 L259.3 286.3 L265.2 293.8 L257.8 301.5 Z" fill="#e6e6e6" stroke="#e6e6e6" stroke-width="1.5" stroke-linejoin="round"/>
    <circle cx="251" cy="289.8" r="2.5" fill="#e6e6e6" stroke="#1c8ad6" stroke-width="0.8"/>
    <circle cx="255" cy="301.3" r="2.4" fill="#e6e6e6"/>
    <path d="M253 292.3 L259 286.6" stroke="#1c8ad6" stroke-width="0.9"/>
    </svg>
<svg class="r" style="left:0;top:0;" width="600" height="451" viewBox="0 0 600 451">
    <path d="M445 179.3 A10 10 0 1 1 450.5 180" stroke="#dcefdc" stroke-width="1.7" fill="none"/>
    <circle cx="449.4" cy="168" r="2.5" fill="#dcefdc"/>
    <path d="M449.5 172 L449.5 181" stroke="#dcefdc" stroke-width="3.6"/>
    </svg>
<svg class="r" style="left:0;top:0;" width="600" height="451" viewBox="0 0 600 451"><rect x="508" y="161.60000000000002" width="14.7" height="11.4" fill="#e8ede8" stroke="#3a8a1f" stroke-width="0.6"/><ellipse cx="515.35" cy="173.0" rx="7.35" ry="2.3" fill="#e0e4f0"/><path d="M508 165.40 A7.35 2.3 0 0 0 522.7 165.40" stroke="#5a8a40" stroke-width="0.8" fill="none"/><path d="M508 169.20 A7.35 2.3 0 0 0 522.7 169.20" stroke="#5a8a40" stroke-width="0.8" fill="none"/><ellipse cx="515.35" cy="161.60000000000002" rx="7.35" ry="2.3" fill="#f4f6f4" stroke="#6a9a50" stroke-width="0.6"/><rect x="512.7" y="167.0" width="15" height="12.000000000000002" fill="#e8ede8" stroke="#3a8a1f" stroke-width="0.6"/><ellipse cx="520.2" cy="178.99999999999997" rx="7.5" ry="2.3" fill="#e0e4f0"/><path d="M512.7 171.00 A7.5 2.3 0 0 0 527.7 171.00" stroke="#5a8a40" stroke-width="0.8" fill="none"/><path d="M512.7 175.00 A7.5 2.3 0 0 0 527.7 175.00" stroke="#5a8a40" stroke-width="0.8" fill="none"/><ellipse cx="520.2" cy="167.0" rx="7.5" ry="2.3" fill="#f4f6f4" stroke="#6a9a50" stroke-width="0.6"/></svg>
<svg class="r" style="left:0;top:0;" width="600" height="451" viewBox="0 0 600 451">
    <path d="M442.2 230 A8 7.5 0 0 1 455.5 225.8" stroke="#eef2ee" stroke-width="3" fill="none"/>
    <path d="M460.7 230.8 L453 229 L459.3 222 Z" fill="#eef2ee"/>
    <path d="M458.5 232 A8 7.5 0 0 1 445.2 236.5" stroke="#e6e6f4" stroke-width="3" fill="none"/>
    <path d="M440 231.8 L447.8 233.3 L441.5 240.3 Z" fill="#e6e6f4"/>
    </svg>
<svg class="r" style="left:0;top:0;" width="600" height="451" viewBox="0 0 600 451">
    <path d="M399 161 L401.8 158 L404.6 161" stroke="#444" stroke-width="1.3" fill="none"/>
    <rect x="411.8" y="228.5" width="1.3" height="1.3" fill="#555"/>
    <rect x="411.8" y="231.2" width="1.3" height="1.3" fill="#555"/>
    <rect x="411.8" y="233.9" width="1.3" height="1.3" fill="#555"/>
    <rect x="411.8" y="236.6" width="1.3" height="1.3" fill="#555"/>
    </svg>
<svg class="r" style="left:0;top:0;" width="600" height="451" viewBox="0 0 600 451">
    <rect x="163.6" y="318.9" width="8.6" height="1.4" fill="#505050"/>
    <rect x="163.6" y="321.1" width="8.6" height="1.4" fill="#505050"/>
    <rect x="163.6" y="323.3" width="8.6" height="1.4" fill="#606060"/>
    <rect x="163.6" y="325.5" width="8.6" height="1.4" fill="#505050"/>
    <path d="M566.3 321.5 L569.3 321.5 M567.8 324.3 L567.8 326.6 M565.7 324.1 L569.9 324.1" stroke="#5a5a5a" stroke-width="1"/>
    <rect x="566.6" y="321.5" width="2.4" height="2.6" fill="#8a8a8a"/>
    <path d="M578.5 321 L584.8 326.7 M584.8 321 L578.5 326.7" stroke="#555" stroke-width="1.2"/>
    <path d="M583.5 347 L586 344.5 L588.5 347" stroke="#b8b8b8" stroke-width="1.1" fill="none"/>
    <path d="M583.5 396.5 L586 399 L588.5 396.5" stroke="#b8b8b8" stroke-width="1.1" fill="none"/>
    </svg>
<svg class="r" style="left:0;top:0;" width="600" height="451" viewBox="0 0 600 451">
    <rect x="166.7" y="412.2" width="9" height="1.4" fill="#505050"/>
    <rect x="166.7" y="414.4" width="9" height="1.4" fill="#505050"/>
    <rect x="166.7" y="416.6" width="9" height="1.4" fill="#606060"/>
    <rect x="166.7" y="418.8" width="9" height="1.4" fill="#505050"/>
    <circle cx="239.3" cy="416.6" r="6" fill="#4e4e4e"/>
    <circle cx="239.6" cy="413.3" r="1.2" fill="#fff"/>
    <path d="M239.5 415.5 L239.5 420" stroke="#fff" stroke-width="2"/>
    <path d="M313 420.3 L320.5 412.8 Q322.5 410.8 324 412.3 Q325.5 413.8 323.5 415.8 L316.5 422.8 Q315 424.2 314 423.2 Q313 422.2 314.5 420.7 L320.5 414.7" stroke="#6a6a6a" stroke-width="1.3" fill="none"/>
    <path d="M382.6 416.6 L391.5 412.6 M382.6 416.6 L391.5 420.4" stroke="#444" stroke-width="1.1"/>
    <rect x="381" y="415" width="3.3" height="3.3" fill="#444"/>
    <rect x="389.8" y="410.9" width="3.3" height="3.3" fill="#444"/>
    <rect x="389.8" y="418.7" width="3.3" height="3.3" fill="#444"/>
    <rect x="471.7" y="411" width="11.3" height="10.3" stroke="#666" stroke-width="1.1" fill="#fafafa"/>
    <rect x="471.7" y="411" width="11.3" height="2" fill="#666"/>
    <path d="M473.5 419.5 L476 417 L478 418.5 L481.5 414.5" stroke="#888" stroke-width="1" fill="none"/>
    <rect x="473.2" y="414.5" width="3.5" height="2" fill="#999"/>
    </svg>
<svg class="r" style="left:0;top:0;" width="600" height="451" viewBox="0 0 600 451">
    <circle cx="12" cy="436.8" r="3.3" stroke="#dfe8f6" stroke-width="1.6" fill="none"/>
    <path d="M14.5 439.3 L18.6 443.3" stroke="#dfe8f6" stroke-width="2" stroke-linecap="round"/>
    <path d="M159.5 437.5 L164.5 437.5 L162 440 Z" fill="#555"/>
    <rect x="170" y="438" width="1.2" height="1.2" fill="#444"/><rect x="172.6" y="438" width="1.2" height="1.2" fill="#444"/><rect x="175.2" y="438" width="1.2" height="1.2" fill="#444"/>
    <path d="M181.3 436.3 L185.3 440.3 M185.3 436.3 L181.3 440.3" stroke="#444" stroke-width="1.2"/>
    <path d="M481.5 441.2 L481.5 438.2 A3.75 3.75 0 0 1 489 438.2 L489 441.2" stroke="#e42828" stroke-width="3" fill="none"/>
    <rect x="480" y="441.2" width="3" height="2.5" fill="#f0f0f0"/>
    <rect x="487.5" y="441.2" width="3" height="2.5" fill="#f0f0f0"/>
    <path d="M504 443.5 Q502.5 443.5 502.8 441.3 Q503.2 439.3 505.2 439.5 Q506 436 509.5 436 Q513 436.2 513.3 440 Q515.3 440.3 515.1 442 Q515 443.5 513 443.5 Z" stroke="#eef2fa" stroke-width="1.1" fill="none"/>
    <path d="M505 434.5 L508.5 438 M508.5 434.5 L505 438" stroke="#e43030" stroke-width="1.4"/>
    </svg>
</body></html>
